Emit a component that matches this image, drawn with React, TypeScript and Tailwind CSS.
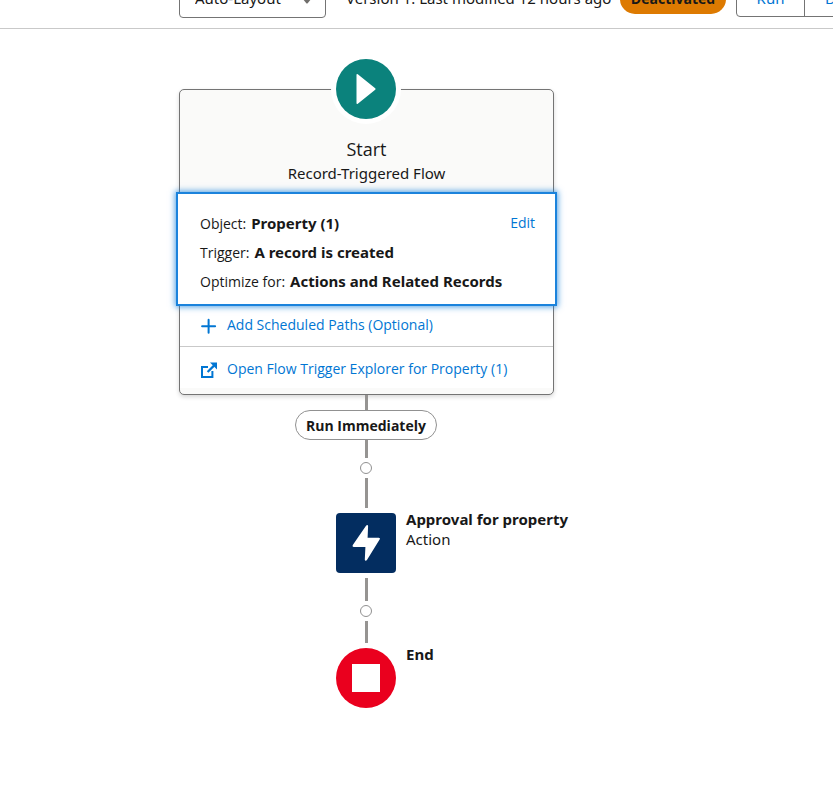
function SelectField() {
  return (
    <label className="relative block h-[37px] w-[147px] shrink-0">
      <span className="sr-only">Layout mode</span>
      <select className="h-full w-full appearance-none rounded-[4px] border border-[#747474] bg-white pb-[2px] pl-[15px] text-[15px] text-[#181818]">
        <option>Auto-Layout</option>
      </select>
      <svg
        className="pointer-events-none absolute top-[16px] right-[14px]"
        width="10"
        height="7"
        viewBox="0 0 10 7"
        fill="#706e6b"
        aria-hidden="true"
      >
        <path d="M1 0h8q1 .5.6 1.4L5.7 6.2q-.7.7-1.4 0L.4 1.4Q0 .5 1 0z" />
      </svg>
    </label>
  );
}

function Header() {
  return (
    <header className="flex h-[29px] items-end overflow-hidden border-b border-[#c9c9c9] bg-white pl-[179px] text-[15px] whitespace-nowrap">
      <div className="mb-[10px] flex shrink-0">
        <SelectField />
      </div>
      <p className="mb-[19px] ml-[20px] w-[269px] shrink-0 leading-[22px]">Version 1: Last modified 12 hours ago</p>
      <span className="mb-[14px] ml-[5px] flex h-[30px] w-[106px] shrink-0 items-center justify-center rounded-full bg-[#dd7a01] pb-[2px] font-['Open_Sans','Noto_Sans',sans-serif] text-[14px] font-bold">
        Deactivated
      </span>
      <div className="mb-[11px] ml-[10px] flex h-[36px] shrink-0 rounded-[4px] border border-[#747474] text-[#0176d3]">
        <button type="button" className="w-[68px] border-r border-[#747474] pb-[2px]">
          Run
        </button>
        <button type="button" className="px-[20px] pb-[2px]">
          Debug
        </button>
      </div>
    </header>
  );
}

function Detail({ label, value }: { label: string; value: string }) {
  return (
    <div className="flex h-[29px] items-center gap-[5px] whitespace-nowrap">
      <dt className="font-['Open_Sans','Noto_Sans',sans-serif] text-[14px]">{label}</dt>
      <dd className="text-[15px] font-bold">{value}</dd>
    </div>
  );
}

function StartCard() {
  return (
    <section className="-mr-px self-stretch rounded-[5px] border border-[#747474] bg-[#fafaf9] pb-[6px] shadow-[0_2px_4px_rgba(0,0,0,0.16)]">
      <div className="flex h-[102px] flex-col items-center pt-[47px]">
        <h2 className="font-['Open_Sans','Noto_Sans',sans-serif] text-[18px] leading-[24px]">Start</h2>
        <p className="text-[15px] leading-[24px]">Record-Triggered Flow</p>
      </div>
      <div className="relative -mx-[4px] flex justify-between border-2 border-[#1b83dc] bg-white pt-[15px] pr-[20px] pb-[8px] pl-[22px] shadow-[0_0_6px_1px_rgba(27,131,220,0.75)]">
        <dl>
          <Detail label="Object:" value="Property (1)" />
          <Detail label="Trigger:" value="A record is created" />
          <Detail label="Optimize for:" value="Actions and Related Records" />
        </dl>
        <a
          href="#edit"
          className="h-[29px] font-['Open_Sans','Noto_Sans',sans-serif] text-[14px] leading-[28px] text-[#0176d3]"
        >
          Edit
        </a>
      </div>
      <a
        href="#paths"
        className="flex h-[41px] items-center gap-[10px] border-b border-[#c9c9c9] bg-white pl-[21px] font-['Open_Sans','Noto_Sans',sans-serif] text-[14px] text-[#0176d3]"
      >
        <svg width="16" height="16" viewBox="0 0 16 16" stroke="#0176d3" strokeWidth="2" strokeLinecap="round" aria-hidden="true">
          <path d="M7.6 1.8v13M1.1 8.3h13" />
        </svg>
        <span className="pb-[3px]">Add Scheduled Paths (Optional)</span>
      </a>
      <a
        href="#explorer"
        className="flex h-[41px] items-center gap-[10px] bg-white pt-[4px] pl-[21px] font-['Open_Sans','Noto_Sans',sans-serif] text-[14px] text-[#0176d3]"
      >
        <svg width="16" height="16" viewBox="0 0 16 16" fill="none" stroke="#0176d3" strokeWidth="2" aria-hidden="true">
          <path d="M7 5H1v10h10.4V9" />
          <path d="M6.6 10L13 3.6" strokeWidth="2.2" />
          <path d="M9 .5h7v7L13.5 5l-2-2z" fill="#0176d3" stroke="none" />
        </svg>
        <span className="pb-[2px]">Open Flow Trigger Explorer for Property (1)</span>
      </a>
    </section>
  );
}

function AddElement() {
  return (
    <button
      type="button"
      aria-label="Add element"
      className="my-[4px] h-[12px] w-[12px] shrink-0 rounded-full border border-[#919191] bg-white"
    />
  );
}

function Flow() {
  return (
    <main className="flex w-[374px] flex-col items-center">
      <button
        type="button"
        aria-label="Start"
        className="relative z-10 -mb-[35px] flex h-[70px] w-[70px] items-center justify-center rounded-full bg-white"
      >
        <svg width="60" height="60" viewBox="0 0 60 60" fill="#fff" aria-hidden="true">
          <circle cx="30" cy="30" r="30" fill="#0b827c" />
          <path d="M20.5 16q0-1.6 1.3-.7l17.4 14q.9.7 0 1.4l-17.4 14q-1.3.9-1.3-.7z" />
        </svg>
      </button>
      <StartCard />
      <div className="h-[15px] w-[3px] bg-[#969492]" />
      <div className="flex h-[30px] w-[142px] items-center justify-center rounded-full border border-[#919191] bg-white font-['Open_Sans','Noto_Sans',sans-serif] text-[14px] font-bold whitespace-nowrap">
        Run Immediately
      </div>
      <div className="h-[18px] w-[3px] bg-[#969492]" />
      <AddElement />
      <div className="mb-[5px] h-[30px] w-[3px] bg-[#969492]" />
      <div className="grid grid-cols-[minmax(0,1fr)_60px_minmax(0,1fr)] self-stretch">
        <button
          type="button"
          aria-label="Approval for property"
          className="col-start-2 h-[60px] w-[60px] rounded-[4px] bg-[#032d60]"
        >
          <svg width="60" height="60" viewBox="0 0 60 60" fill="#fff" aria-hidden="true">
            <path d="M30.2 12.5q1.6-1.3 1.9.5l-.5 11.7h11q2 .2 1 1.9L30.8 47.3q-1.7 1.2-2-.6l.6-12.7H17.6q-1.8-.3-.8-1.9z" />
          </svg>
        </button>
        <div className="pl-[10px] whitespace-nowrap">
          <h3 className="text-[15px] leading-[12px] font-bold">Approval for property</h3>
          <p className="text-[15px] leading-[28px]">Action</p>
        </div>
      </div>
      <div className="mt-[5px] h-[23px] w-[3px] bg-[#969492]" />
      <AddElement />
      <div className="mb-[5px] h-[22px] w-[3px] bg-[#969492]" />
      <div className="grid grid-cols-[minmax(0,1fr)_60px_minmax(0,1fr)] self-stretch">
        <button
          type="button"
          aria-label="End"
          className="col-start-2 flex h-[60px] w-[60px] items-center justify-center rounded-full bg-[#ea001e]"
        >
          <span className="h-[28px] w-[28px] bg-white" />
        </button>
        <h3 className="pl-[10px] text-[15px] leading-[12px] font-bold">End</h3>
      </div>
    </main>
  );
}

export default function App() {
  return (
    <div className="min-h-screen bg-white font-['Noto_Sans','Open_Sans',sans-serif] text-[#181818]">
      <Header />
      <div className="pt-[25px] pl-[179px]">
        <Flow />
      </div>
    </div>
  );
}
